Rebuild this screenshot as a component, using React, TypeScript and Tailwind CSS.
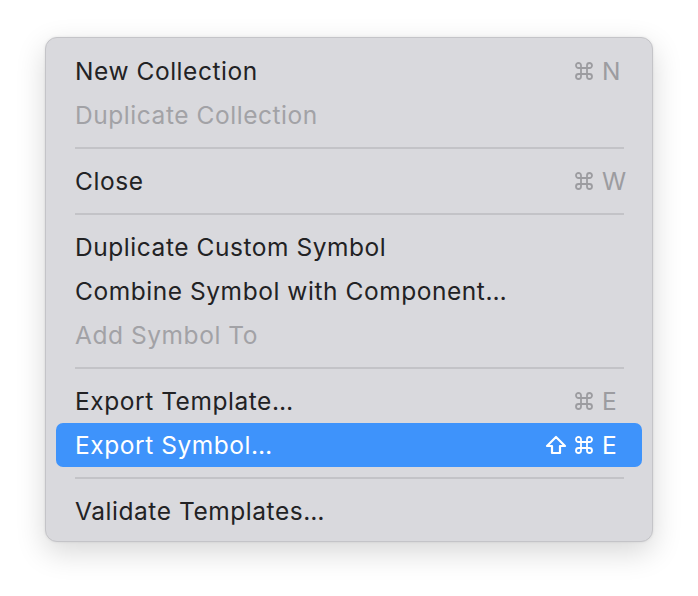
import React from "react";

type Item =
  | { kind: "sep" }
  | { kind: "item"; label: string; disabled?: boolean; active?: boolean; mods?: string[]; keyChar?: string };

const ITEMS: Item[] = [
  { kind: "item", label: "New Collection", mods: ["cmd"], keyChar: "N" },
  { kind: "item", label: "Duplicate Collection", disabled: true },
  { kind: "sep" },
  { kind: "item", label: "Close", mods: ["cmd"], keyChar: "W" },
  { kind: "sep" },
  { kind: "item", label: "Duplicate Custom Symbol" },
  { kind: "item", label: "Combine Symbol with Component…" },
  { kind: "item", label: "Add Symbol To", disabled: true },
  { kind: "sep" },
  { kind: "item", label: "Export Template…", mods: ["cmd"], keyChar: "E" },
  { kind: "item", label: "Export Symbol…", active: true, mods: ["shift", "cmd"], keyChar: "E" },
  { kind: "sep" },
  { kind: "item", label: "Validate Templates…" },
];

function ShiftIcon() {
  return (
    <svg width="22" height="20" viewBox="0 0 22 20" fill="none">
      <path
        d="M11 2 L20 11 H15 V18 H7 V11 H2 Z"
        stroke="currentColor"
        strokeWidth="2.2"
        strokeLinejoin="round"
      />
    </svg>
  );
}

function CmdIcon() {
  return (
    <svg width="20" height="20" viewBox="0 0 20 20" fill="none">
      <path
        d="M7 7 V4.5 A2.5 2.5 0 1 0 4.5 7 H15.5 A2.5 2.5 0 1 0 13 4.5 V15.5 A2.5 2.5 0 1 0 15.5 13 H4.5 A2.5 2.5 0 1 0 7 15.5 Z"
        stroke="currentColor"
        strokeWidth="1.8"
        strokeLinejoin="round"
      />
    </svg>
  );
}

export default function App() {
  return (
    <div className="w-[698px] h-[596px] bg-white pt-[37px] pl-[45px]" style={{ fontFamily: "Inter, 'Noto Sans', sans-serif" }}>
      <div className="w-[608px] rounded-[12px] bg-[#d9d9dd] border border-[#c4c4c8] pt-[11px] pb-[8px] px-[10px] shadow-[0_10px_30px_rgba(0,0,0,0.16),0_0_3px_rgba(0,0,0,0.08)]">
        {ITEMS.map((it, i) => {
          if (it.kind === "sep") {
            return (
              <div key={i} className="h-[22px] flex items-center pl-[19px] pr-[18px]">
                <div className="h-[2px] w-full bg-[#c3c3c7]" />
              </div>
            );
          }
          const textColor = it.active ? "text-white" : it.disabled ? "text-[#a2a2a6]" : "text-[#222224]";
          return (
            <div
              key={i}
              className={`h-[44px] flex items-center pl-[19px] pr-[20px] rounded-[7px] ${it.active ? "bg-[#3e93fb]" : ""}`}
            >
              <span className={`flex-1 text-[24.5px] tracking-[0.55px] ${textColor}`}>{it.label}</span>
              {it.keyChar && (
                <div className={`flex items-center ${it.active ? "text-white" : "text-[#9c9ca0]"}`}>
                  <div className="flex items-center justify-end gap-[7px] w-[80px]">
                    {it.mods?.map((m) => (m === "shift" ? <ShiftIcon key={m} /> : <CmdIcon key={m} />))}
                  </div>
                  <span className="ml-[8px] w-[20px] text-[24.5px]">{it.keyChar}</span>
                </div>
              )}
            </div>
          );
        })}
      </div>
    </div>
  );
}
